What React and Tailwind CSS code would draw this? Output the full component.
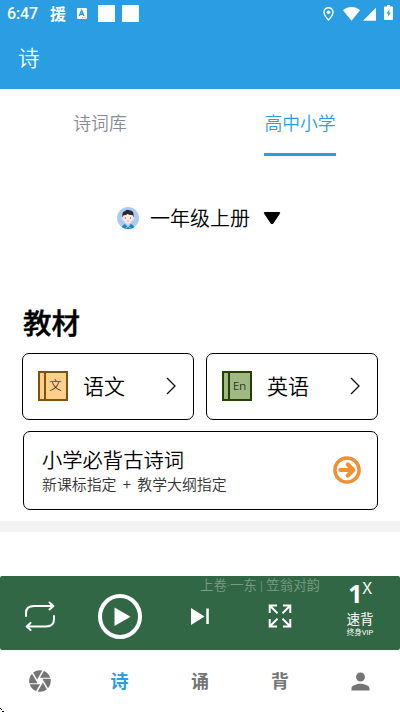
import React from "react";
import { MdCamera, MdPerson } from "react-icons/md";

function StatusBar() {
  return (
    <div className="flex h-7 items-center justify-between pl-[7px] pr-[7px] text-white">
      <div className="flex h-7 items-center">
        <span className="w-[43px] font-[Roboto] text-base font-medium leading-7 tracking-[-0.1px]">6:47</span>
        <span className="w-[27px] pb-px text-base font-bold leading-[27px]">援</span>
        <svg className="mb-px mr-[11px] h-[11px] w-[10px]" viewBox="0 0 10 11">
          <rect width="10" height="11" rx="0.8" fill="#fff" />
          <path d="M2.3 8 L4.6 2.4 L6.9 8 M3.2 6.2 H6" stroke="#2a9de3" strokeWidth="1.5" fill="none" />
          <path d="M5.2 9.5h1M7.4 9.5h1" stroke="#2a9de3" strokeWidth="0.8" />
        </svg>
        <span className="mb-[2px] mr-[7px] h-[17px] w-[17px] bg-white" />
        <span className="mb-[2px] h-[17px] w-[17px] rounded-[1px] bg-white" />
      </div>
      <div className="flex h-7 items-center pb-px">
        <svg className="mr-[9px] h-[14px] w-[11px]" viewBox="0 0 11 14">
          <path d="M5.5 .8C2.9 .8 1 2.7 1 5.2 1 8.2 5.5 13 5.5 13S10 8.200 10 5.200C10 2.700 8.100.8 5.500.8Z" fill="none" stroke="#fff" strokeWidth="1.4" />
          <circle cx="5.500" cy="5.200" r="1.800" fill="#fff" />
        </svg>
        <svg className="mr-[3px] h-[14px] w-[17px]" viewBox="0 0 17 14">
          <path d="M0 3.200C2.500 1 5.400 0 8.500 0S14.500 1 17 3.200L8.500 13.800Z" fill="#fff" />
        </svg>
        <svg className="mr-2 h-[14px] w-[13px]" viewBox="0 0 13 14">
          <path d="M0 13.800L13 .8V13.800Z" fill="#fff" />
        </svg>
        <svg className="mb-[2px] h-[15px] w-[9px]" viewBox="0 0 9 15">
          <path d="M3 0h3v1.500h2.200q.8 0 .8.800v11.900q0 .8-.8.800H.8q-.8 0-.8-.800V2.300q0-.8.8-.800H3Z" fill="#fff" />
          <path d="M5.600 4.300L2.500 8.600H4.200L3.700 12.200L6.700 7.600H5Z" fill="#2a9de3" />
        </svg>
      </div>
    </div>
  );
}

function Avatar() {
  return (
    <svg className="h-[22px] w-[22px]" viewBox="0 0 22 22">
      <clipPath id="face"><circle cx="11" cy="11" r="11" /></clipPath>
      <g clipPath="url(#face)">
        <rect width="22" height="22" fill="#a9cdf0" />
        <path d="M4.500 22Q5 17.300 8.500 17H13.500Q17 17.300 17.500 22Z" fill="#1489d0" />
        <path d="M9 15H13V17.500L11 19L9 17.500Z" fill="#f5d0c0" />
        <path d="M8.500 17.500L13.500 21M13.500 17.500L9 21" stroke="#d4edfa" strokeWidth=".7" />
        <circle cx="6" cy="11.500" r="1.400" fill="#f8ddd1" />
        <circle cx="16" cy="11.500" r="1.400" fill="#f8ddd1" />
        <ellipse cx="11" cy="11" rx="4.900" ry="5.400" fill="#fdebe3" />
        <path d="M5.500 10.500Q4.500 4.800 8 4Q10 2.200 12.500 3.200Q17.500 3.300 16.500 10.500L15.500 8Q12.500 8.300 10.500 7Q9 8.500 6.500 8.300Z" fill="#2c2930" />
        <path d="M8.300 10.500v1.200M13.500 10.500v1.200" stroke="#333" strokeWidth=".9" />
        <path d="M10 14q1 .7 2 0" stroke="#dc7770" strokeWidth=".7" fill="none" />
      </g>
    </svg>
  );
}

function Chevron() {
  return (
    <svg className="mb-px h-[18px] w-[10px]" viewBox="0 0 10 18" fill="none" stroke="#111" strokeWidth="1.300">
      <path d="M1 1L9 9L1 17" />
    </svg>
  );
}

function SubjectCard({ title, children }) {
  return (
    <div className="flex h-[67px] flex-1 items-center rounded-[7px] border border-black pb-px pl-[15px] pr-[17px]">
      {children}
      <span className="ml-[15px] flex-1 pb-[2px] text-[21px] leading-[30px]">{title}</span>
      <Chevron />
    </div>
  );
}

function Player() {
  return (
    <div className="relative grid h-[74px] grid-cols-5 rounded-[2px] bg-[#326745] text-white">
      <div className="absolute left-[200px] top-0 whitespace-nowrap font-[Roboto,'Noto_Sans_CJK_SC',sans-serif] text-[13.400px] leading-[19px] text-[#7b9d87]">上卷·一东 | 笠翁对韵</div>
      <div className="flex items-center justify-center pt-[6px]">
        <svg className="h-[30px] w-[30px]" viewBox="0 0 30 30" fill="none" stroke="#fff" strokeWidth="2" strokeLinecap="round" strokeLinejoin="round">
          <path d="M1 15V12Q1 5 9 5H28M24.500 1.500L28.300 5L24.500 8.500M29 15V18Q29 25.500 21 25.500H2M5.500 22L1.700 25.500L5.500 29" />
        </svg>
      </div>
      <div className="flex items-center justify-center pt-[7px]">
        <svg className="h-[45px] w-[44px]" viewBox="0 0 44 45">
          <ellipse cx="22" cy="22.500" rx="20" ry="20.500" fill="none" stroke="#fff" strokeWidth="4" />
          <path d="M16.500 13.500L32.500 22.700L16.500 32Z" fill="#fff" />
        </svg>
      </div>
      <div className="flex items-center justify-center pt-[7px]">
        <svg className="h-[17px] w-[18px]" viewBox="0 0 18 17" fill="#fff">
          <path d="M0 0L13.500 8.500L0 17ZM15.300.500H17.800V16H15.300Z" />
        </svg>
      </div>
      <div className="flex items-center justify-center pt-[6px]">
        <svg className="h-6 w-6" viewBox="0 0 24 24" fill="none" stroke="#fff" strokeWidth="2">
          <path d="M9 1.500H1.700V9M1.700 1.500L9.500 9.300M15 1.500H22.300V9M22.300 1.500L14.500 9.300M9 22.500H1.700V15M1.700 22.500L9.500 14.700M15 22.500H22.300V15M22.300 22.500L14.500 14.700" />
        </svg>
      </div>
      <div className="flex flex-col items-center font-normal">
        <div className="flex h-[33px] items-start pt-px">
          <span className="font-['Noto_Sans',sans-serif] text-[25px] font-bold leading-[32px]">1</span>
          <span className="pt-[2px] font-['Noto_Sans',sans-serif] text-base leading-[19px]">X</span>
        </div>
        <span className="text-[13.500px] leading-[18px]">速背</span>
        <span className="font-[Roboto,'Noto_Sans_CJK_SC',sans-serif] text-[7.500px] leading-[11px]">终身VIP</span>
      </div>
    </div>
  );
}

export default function App() {
  return (
    <div className="flex h-[712px] w-[400px] flex-col overflow-hidden bg-white font-['Noto_Sans_CJK_SC',sans-serif] font-[350] text-black">
      <header className="h-[89px] bg-[#2a9de3]">
        <StatusBar />
        <h1 className="pl-[18px] pt-[13px] text-[21.500px] font-[350] leading-8 text-white">诗</h1>
      </header>

      <nav className="grid h-[67px] grid-cols-2 text-[17.800px] leading-[26px]">
        <div className="flex justify-center pt-[20px] text-[#868b95]">诗词库</div>
        <div className="flex justify-center">
          <div className="w-[72px] border-b-[3px] border-[#2a9de3] pt-[20px] text-center text-[#2a9de3]">高中小学</div>
        </div>
      </nav>

      <div className="mt-[47px] flex h-[30px] items-center pl-[117px]">
        <Avatar />
        <span className="ml-[11px] text-[20px] leading-[30px]">一年级上册</span>
        <svg className="ml-[13px] h-[14px] w-[18px]" viewBox="0 0 18 14">
          <path d="M2 1H16Q18 1 16.800 2.700L10.500 12.200Q9 14 7.500 12.200L1.200 2.700Q0 1 2 1Z" />
        </svg>
      </div>

      <section className="mt-[67px] h-[221px] pl-[22px] pr-[22px]">
        <h2 className="h-[53px] pl-px pt-px text-[28.500px] font-medium leading-[42px] [-webkit-text-stroke:0.4px_black]">教材</h2>
        <div className="flex gap-3">
          <SubjectCard title="语文">
            <div className="flex h-[30px] w-[30px] items-center border-2 border-[#805311] bg-[#ffd08b]">
              <span className="h-full w-[6px] border-r-2 border-[#805311]" />
              <span className="flex-1 pb-[2px] pr-px text-center text-[12.500px] font-light leading-[24px]">文</span>
            </div>
          </SubjectCard>
          <SubjectCard title="英语">
            <div className="flex h-[30px] w-[30px] items-center border-2 border-[#263f06] bg-[#9fb982]">
              <span className="h-full w-[6px] border-r-2 border-[#263f06]" />
              <span className="flex-1 pr-px text-center font-['Noto_Sans',sans-serif] text-[11.500px] font-light leading-[26px]">En</span>
            </div>
          </SubjectCard>
        </div>
        <div className="ml-px mt-[11px] flex h-[79px] items-center justify-between rounded-[7px] border border-black pl-[18px] pr-[16px]">
          <div className="pb-px">
            <div className="text-[20.300px] leading-[28px]">小学必背古诗词</div>
            <div className="text-[14.900px] leading-[22px] text-[#333] [word-spacing:3px]">新课标指定 + 教学大纲指定</div>
          </div>
          <svg className="mb-px h-7 w-7" viewBox="0 0 28 28" fill="none" stroke="#ec9136" strokeWidth="3.500">
            <circle cx="14" cy="14" r="12.100" />
            <path d="M7.500 14H20M14.800 8.500L20.300 14L14.800 19.500" strokeWidth="4.200" strokeLinecap="round" strokeLinejoin="round" />
          </svg>
        </div>
      </section>

      <div className="h-[11px] bg-[#f3f3f3]" />
      <div className="h-11" />
      <Player />
      <nav className="relative grid h-[62px] grid-cols-5 items-center text-center text-[18px] font-bold text-[#757575]">
        <MdCamera className="mx-auto h-[26px] w-[26px]" />
        <span className="pb-px pr-px text-[#2a9de3]">诗</span>
        <span className="pb-px">诵</span>
        <span className="pb-px">背</span>
        <MdPerson className="mx-auto h-[27px] w-[27px]" />
        <svg className="absolute bottom-0 left-0 h-[4px] w-[4px]" viewBox="0 0 4 4"><path d="M0 0H1V1H0ZM1 1H2V2H1ZM2 3H4V4H2Z" /></svg>
      </nav>
    </div>
  );
}
